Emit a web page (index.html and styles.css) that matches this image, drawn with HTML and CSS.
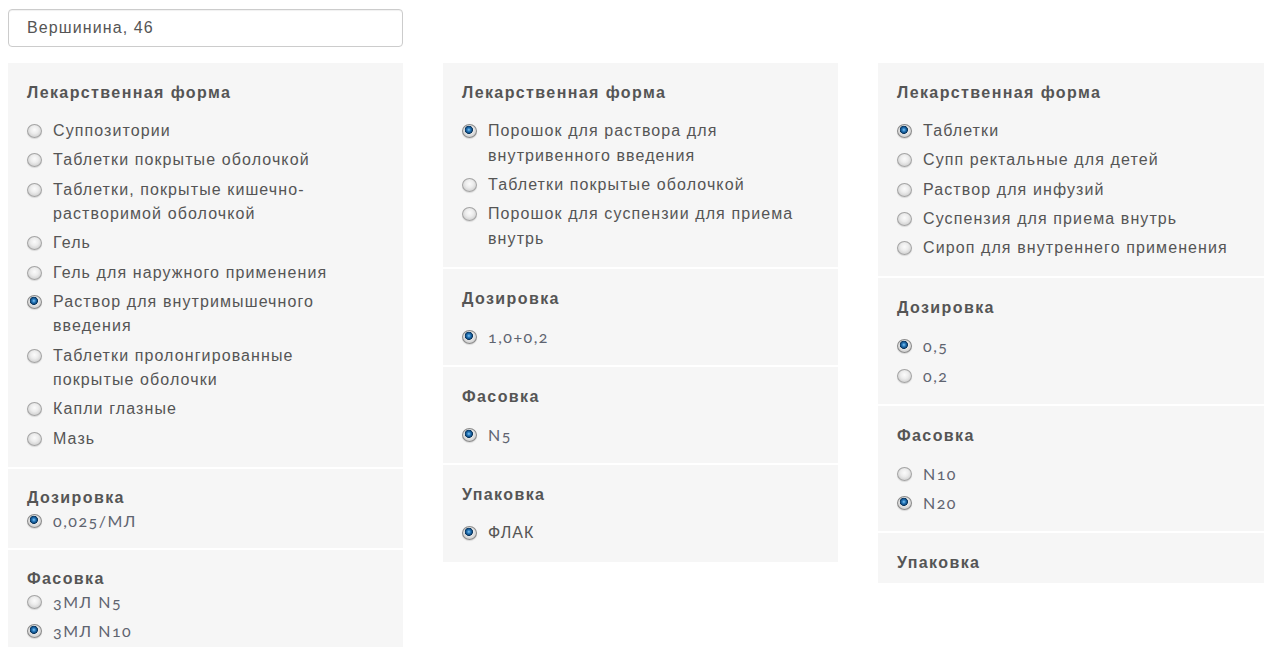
FILE: index.html
```html
<!DOCTYPE html>
<html lang="ru">
<head>
<meta charset="utf-8">
<title>Подбор препарата</title>
<link rel="stylesheet" href="styles.css">
</head>
<body>
<div class="page">
  <input class="search" type="text" value="Вершинина, 46">

  <div class="columns">
    <!-- первый препарат -->
    <div class="col">
      <section class="group">
        <h4 class="group-title">Лекарственная форма</h4>
        <ul class="options">
          <li><label class="option"><input type="radio" name="a-form"><span>Суппозитории</span></label></li>
          <li><label class="option"><input type="radio" name="a-form"><span>Таблетки покрытые оболочкой</span></label></li>
          <li><label class="option"><input type="radio" name="a-form"><span>Таблетки, покрытые кишечно-растворимой оболочкой</span></label></li>
          <li><label class="option"><input type="radio" name="a-form"><span>Гель</span></label></li>
          <li><label class="option"><input type="radio" name="a-form"><span>Гель для наружного применения</span></label></li>
          <li><label class="option"><input type="radio" name="a-form" checked><span>Раствор для внутримышечного введения</span></label></li>
          <li><label class="option"><input type="radio" name="a-form"><span>Таблетки пролонгированные покрытые оболочки</span></label></li>
          <li><label class="option"><input type="radio" name="a-form"><span>Капли глазные</span></label></li>
          <li><label class="option"><input type="radio" name="a-form"><span>Мазь</span></label></li>
        </ul>
      </section>
      <section class="group group--compact">
        <h4 class="group-title">Дозировка</h4>
        <ul class="options">
          <li><label class="option"><input type="radio" name="a-dose" checked><span class="value">0,025/МЛ</span></label></li>
        </ul>
      </section>
      <section class="group group--compact">
        <h4 class="group-title">Фасовка</h4>
        <ul class="options">
          <li><label class="option"><input type="radio" name="a-pack"><span class="value">3МЛ N5</span></label></li>
          <li><label class="option"><input type="radio" name="a-pack" checked><span class="value">3МЛ N10</span></label></li>
        </ul>
      </section>
    </div>

    <!-- второй препарат -->
    <div class="col">
      <section class="group">
        <h4 class="group-title">Лекарственная форма</h4>
        <ul class="options">
          <li><label class="option"><input type="radio" name="b-form" checked><span>Порошок для раствора для внутривенного введения</span></label></li>
          <li><label class="option"><input type="radio" name="b-form"><span>Таблетки покрытые оболочкой</span></label></li>
          <li><label class="option"><input type="radio" name="b-form"><span>Порошок для суспензии для приема внутрь</span></label></li>
        </ul>
      </section>
      <section class="group">
        <h4 class="group-title">Дозировка</h4>
        <ul class="options">
          <li><label class="option"><input type="radio" name="b-dose" checked><span class="value">1,0+0,2</span></label></li>
        </ul>
      </section>
      <section class="group">
        <h4 class="group-title">Фасовка</h4>
        <ul class="options">
          <li><label class="option"><input type="radio" name="b-pack" checked><span class="value">N5</span></label></li>
        </ul>
      </section>
      <section class="group">
        <h4 class="group-title">Упаковка</h4>
        <ul class="options">
          <li><label class="option"><input type="radio" name="b-box" checked><span>ФЛАК</span></label></li>
        </ul>
      </section>
    </div>

    <!-- третий препарат -->
    <div class="col">
      <section class="group">
        <h4 class="group-title">Лекарственная форма</h4>
        <ul class="options">
          <li><label class="option"><input type="radio" name="c-form" checked><span>Таблетки</span></label></li>
          <li><label class="option"><input type="radio" name="c-form"><span>Супп ректальные для детей</span></label></li>
          <li><label class="option"><input type="radio" name="c-form"><span>Раствор для инфузий</span></label></li>
          <li><label class="option"><input type="radio" name="c-form"><span>Суспензия для приема внутрь</span></label></li>
          <li><label class="option"><input type="radio" name="c-form"><span>Сироп для внутреннего применения</span></label></li>
        </ul>
      </section>
      <section class="group">
        <h4 class="group-title">Дозировка</h4>
        <ul class="options">
          <li><label class="option"><input type="radio" name="c-dose" checked><span class="value">0,5</span></label></li>
          <li><label class="option"><input type="radio" name="c-dose"><span class="value">0,2</span></label></li>
        </ul>
      </section>
      <section class="group">
        <h4 class="group-title">Фасовка</h4>
        <ul class="options">
          <li><label class="option"><input type="radio" name="c-pack"><span class="value">N10</span></label></li>
          <li><label class="option"><input type="radio" name="c-pack" checked><span class="value">N20</span></label></li>
        </ul>
      </section>
      <section class="group group--empty">
        <h4 class="group-title">Упаковка</h4>
      </section>
    </div>
  </div>
</div>
</body>
</html>
```

FILE: styles.css
```css
html, body {
  margin: 0;
  padding: 0;
  background: #fff;
  overflow: hidden;
}

body {
  font-family: "Liberation Sans", Arial, sans-serif;
  font-size: 16px;
  color: #555;
}

.page {
  padding: 9px 0 0 8px;
}

/* поле адреса */
.search {
  display: block;
  box-sizing: border-box;
  width: 395px;
  height: 38px;
  margin: 0 0 16px;
  padding: 0 18px;
  border: 1px solid #ccc;
  border-radius: 4px;
  box-shadow: inset 0 1px 1px rgba(0, 0, 0, 0.06);
  font: 16px "Liberation Sans", Arial, sans-serif;
  letter-spacing: 1.1px;
  color: #555;
  outline: none;
}

/* три колонки препаратов */
.columns {
  display: grid;
  grid-template-columns: repeat(3, 395px);
  column-gap: 40px;
  align-items: start;
}

.col {
  display: flex;
  flex-direction: column;
  gap: 2px;
}

.group {
  background: #f6f6f6;
  padding: 19px 38px 11px 19px;
}

.group-title {
  margin: 0 0 15px;
  font-size: 16px;
  line-height: 22px;
  font-weight: bold;
  letter-spacing: 1.4px;
  color: #555;
}

.options {
  list-style: none;
  margin: 0;
  padding: 0;
}

.options li {
  margin-bottom: 4.75px;
}

.group--compact {
  padding-top: 18px;
  padding-bottom: 10px;
}

.group--compact .group-title {
  margin-bottom: 0;
}

.group--empty {
  padding-bottom: 9px;
}

.group--empty .group-title {
  margin-bottom: 0;
}

.option {
  display: flex;
  align-items: flex-start;
  gap: 11px;
  line-height: 24.5px;
  letter-spacing: 1.1px;
  cursor: pointer;
}

/* радиокнопки в старом системном стиле */
.option input {
  appearance: none;
  -webkit-appearance: none;
  flex: none;
  box-sizing: border-box;
  width: 15px;
  height: 14px;
  margin: 5px 0 0 0;
  border: 1px solid #a4a4a4;
  border-radius: 50%;
  background: radial-gradient(circle at 50% 40%, #fbfbfb 0, #ececec 40%, #cfcfcf 80%, #b9b9b9 100%);
  box-shadow: 0 1px 1px rgba(0, 0, 0, 0.12);
}

.option input:checked {
  border-color: #8a8a8a;
  background:
    radial-gradient(circle at 45% 40%, #8dcaf2 0, #2f82c4 1.5px, #115089 3px, #0a3358 3.8px, rgba(10, 51, 88, 0) 4.4px),
    radial-gradient(circle at 50% 40%, #fbfbfb 0, #e8e8e8 40%, #cbcbcb 80%, #b3b3b3 100%);
}

/* числовые значения набраны отдельной гарнитурой */
.value {
  font-family: Lato, "Liberation Sans", sans-serif;
  font-variant-numeric: oldstyle-nums;
  letter-spacing: 1.5px;
  color: #5f6470;
}
```
